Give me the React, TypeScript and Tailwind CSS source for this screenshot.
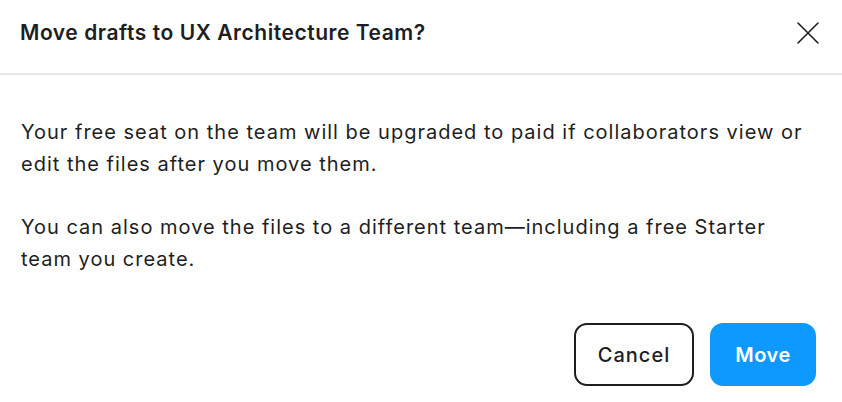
const font = { fontFamily: "Inter, 'Noto Sans', sans-serif" };

function CloseIcon() {
  return (
    <svg width="22" height="22" viewBox="0 0 22 22" fill="none" stroke="#1e1e1e" strokeWidth="1.6" strokeLinecap="round">
      <path d="M1 1L21 21M21 1L1 21" />
    </svg>
  );
}

export default function App() {
  return (
    <div className="w-[842px] h-[402px] bg-white flex flex-col text-[#1e1e1e]" style={font}>
      {/* Header */}
      <div className="h-[75px] flex items-start justify-between pl-[20px] pr-[23px] pt-[19px] border-b-2 border-[#e8e8e8] shrink-0">
        <h1 className="text-[21px] leading-[28px] font-semibold tracking-[0.55px]">
          Move drafts to UX Architecture Team?
        </h1>
        <button className="mt-[3px]">
          <CloseIcon />
        </button>
      </div>

      {/* Body */}
      <div className="pl-[21px] pr-[20px] pt-[41px] text-[20px] leading-[32px] tracking-[1px] flex flex-col gap-[31px]">
        <p>
          Your free seat on the team will be upgraded to paid if collaborators view or
          <br />
          edit the files after you move them.
        </p>
        <p>
          You can also move the files to a different team—including a free Starter
          <br />
          team you create.
        </p>
      </div>

      {/* Footer */}
      <div className="flex justify-end gap-[16px] pr-[26px] mt-[48px]">
        <button className="w-[120px] h-[63px] rounded-[13px] border-2 border-[#1e1e1e] text-[20px] font-medium tracking-[1px]">
          Cancel
        </button>
        <button className="w-[106px] h-[63px] rounded-[13px] bg-[#0d99ff] text-white text-[20px] font-semibold tracking-[0.5px]">
          Move
        </button>
      </div>
    </div>
  );
}
